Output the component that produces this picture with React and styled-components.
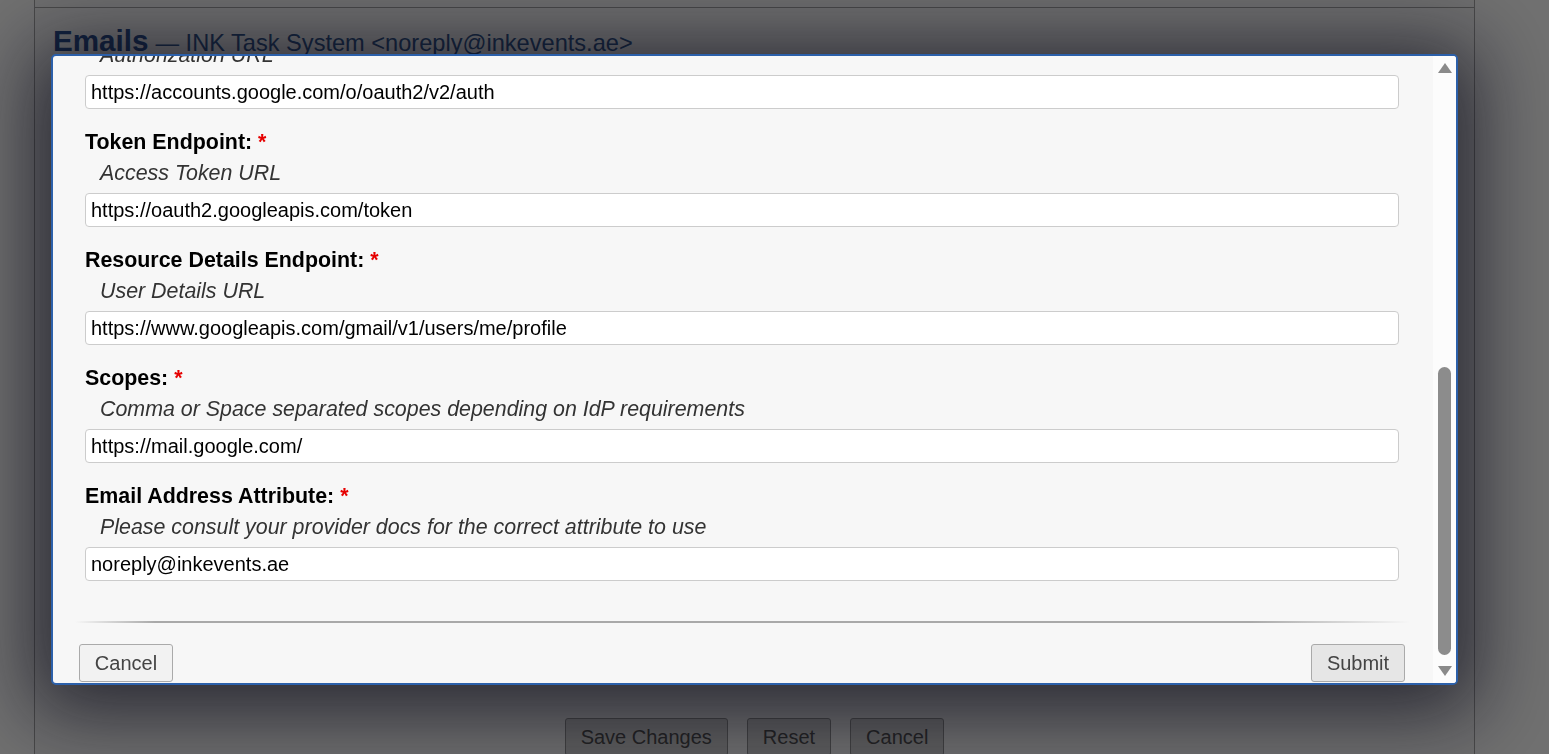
import React from "react";
import styled, { createGlobalStyle } from "styled-components";

const GlobalStyle = createGlobalStyle`
  html, body {
    margin: 0;
    padding: 0;
    height: 100%;
    overflow: hidden;
    background: #ffffff;
    font-family: "Liberation Sans", Arial, sans-serif;
  }
  * { box-sizing: border-box; }
`;

const Page = styled.div`
  margin-left: 34px;
  width: 1441px;
  height: 800px;
  background: #fbfbfb;
  border-left: 1px solid #a6a6a6;
  border-right: 1px solid #a6a6a6;
  display: flex;
  flex-direction: column;
`;

const TopRule = styled.div`
  height: 8px;
  border-bottom: 1px solid #a6a6a6;
`;

const Heading = styled.h1`
  margin: 16px 0 0 18px;
  font-size: 29.6px;
  line-height: 33px;
  font-weight: bold;
  color: #2c5190;
  white-space: nowrap;
`;

const SubTitle = styled.span`
  font-size: 23.6px;
  font-weight: normal;
  color: #33588f;
  margin-left: 7px;
`;

const FormPlaceholder = styled.div`
  flex: 1;
`;

const BottomBar = styled.div`
  display: flex;
  justify-content: center;
  gap: 19px;
  padding-bottom: 44px;
`;

const PageButton = styled.button`
  height: 38px;
  padding: 0 15px;
  font-family: "Liberation Sans", Arial, sans-serif;
  font-size: 20px;
  color: #505050;
  background: #d6d6d6;
  border: 1px solid #949494;
  border-radius: 3px;
`;

const Overlay = styled.div`
  position: fixed;
  inset: 0;
  background: rgba(0, 0, 0, 0.56);
`;

const Modal = styled.div`
  position: fixed;
  left: 51px;
  top: 54px;
  width: 1407px;
  height: 631px;
  border: 2px solid #2c60aa;
  border-radius: 5px;
  background: #f7f7f7;
  display: flex;
  overflow: hidden;
  box-shadow: 0 10px 80px 18px rgba(8, 8, 22, 0.68);
`;

const ScrollBody = styled.div`
  flex: 1;
  display: flex;
  flex-direction: column;
  justify-content: flex-end;
  overflow: hidden;
`;

const Content = styled.div`
  flex-shrink: 0;
  padding-bottom: 1px;
`;

const Fields = styled.div`
  padding: 0 34px 0 32px;
`;

const Field = styled.div`
  padding-top: 21px;
`;

const Label = styled.div`
  font-size: 21.4px;
  line-height: 24px;
  font-weight: bold;
  color: #000;
`;

const Required = styled.span`
  color: #e60000;
`;

const Help = styled.div`
  margin-top: 7px;
  padding-left: 15px;
  font-size: 21.4px;
  line-height: 24px;
  font-style: italic;
  color: #333;
`;

const Input = styled.input`
  display: block;
  width: 100%;
  height: 34px;
  margin-top: 8px;
  padding: 0 5px;
  font-family: "Liberation Sans", Arial, sans-serif;
  font-size: 20px;
  color: #000;
  background: #fff;
  border: 1px solid #cccccc;
  border-radius: 4px;
  outline: none;
`;

const Divider = styled.div`
  height: 2px;
  margin: 40px 23px 0 22px;
  background: linear-gradient(
    to right,
    rgba(170, 170, 170, 0),
    #a9a9a9 6%,
    #a9a9a9 88%,
    rgba(170, 170, 170, 0)
  );
`;

const Footer = styled.div`
  display: flex;
  justify-content: space-between;
  margin-top: 21px;
  padding: 0 28px 0 26px;
`;

const DialogButton = styled.button`
  width: 94px;
  height: 38px;
  font-family: "Liberation Sans", Arial, sans-serif;
  font-size: 20px;
  color: #444;
  background: ${(p) => (p.$primary ? "#e6e6e6" : "#f2f2f2")};
  border: 1px solid #aaaaaa;
  border-radius: 3px;
`;

const Scrollbar = styled.div`
  width: 23px;
  background: #fcfcfc;
  display: flex;
  flex-direction: column;
`;

const ArrowBox = styled.div`
  height: 24px;
  display: flex;
  align-items: center;
  justify-content: center;
`;

const Arrow = styled.div`
  width: 0;
  height: 0;
  border-left: 7.5px solid transparent;
  border-right: 7.5px solid transparent;
  ${(p) =>
    p.$down
      ? "border-top: 10px solid #8a8a8a;"
      : "border-bottom: 10px solid #8a8a8a;"}
`;

const Track = styled.div`
  flex: 1;
  display: flex;
  flex-direction: column;
  justify-content: flex-end;
  align-items: center;
  padding-bottom: 4px;
`;

const Thumb = styled.div`
  width: 13px;
  border-radius: 7px;
  background: #8c8c8c;
`;

const fields = [
  { label: "Client ID:", help: "Your client app ID", value: "inktask-mail-client" },
  { label: "Client Secret:", help: "Your client app secret", value: "••••••••••••••••" },
  {
    label: "Authorization Endpoint:",
    help: "Authorization URL",
    value: "https://accounts.google.com/o/oauth2/v2/auth",
  },
  {
    label: "Token Endpoint:",
    help: "Access Token URL",
    value: "https://oauth2.googleapis.com/token",
  },
  {
    label: "Resource Details Endpoint:",
    help: "User Details URL",
    value: "https://www.googleapis.com/gmail/v1/users/me/profile",
  },
  {
    label: "Scopes:",
    help: "Comma or Space separated scopes depending on IdP requirements",
    value: "https://mail.google.com/",
  },
  {
    label: "Email Address Attribute:",
    help: "Please consult your provider docs for the correct attribute to use",
    value: "noreply@inkevents.ae",
  },
];

export default function App() {
  return (
    <>
      <GlobalStyle />
      <Page>
        <TopRule />
        <Heading>
          Emails<SubTitle>— INK Task System &lt;noreply@inkevents.ae&gt;</SubTitle>
        </Heading>
        <FormPlaceholder />
        <BottomBar>
          <PageButton>Save Changes</PageButton>
          <PageButton>Reset</PageButton>
          <PageButton>Cancel</PageButton>
        </BottomBar>
      </Page>
      <Overlay />
      <Modal>
        <ScrollBody>
          <Content>
            <Fields>
              {fields.map((f) => (
                <Field key={f.label}>
                  <Label>
                    {f.label} <Required>*</Required>
                  </Label>
                  <Help>{f.help}</Help>
                  <Input defaultValue={f.value} readOnly />
                </Field>
              ))}
            </Fields>
            <Divider />
            <Footer>
              <DialogButton>Cancel</DialogButton>
              <DialogButton $primary>Submit</DialogButton>
            </Footer>
          </Content>
        </ScrollBody>
        <Scrollbar>
          <ArrowBox>
            <Arrow />
          </ArrowBox>
          <Track>
            <Thumb style={{ height: 288 }} />
          </Track>
          <ArrowBox>
            <Arrow $down />
          </ArrowBox>
        </Scrollbar>
      </Modal>
    </>
  );
}
